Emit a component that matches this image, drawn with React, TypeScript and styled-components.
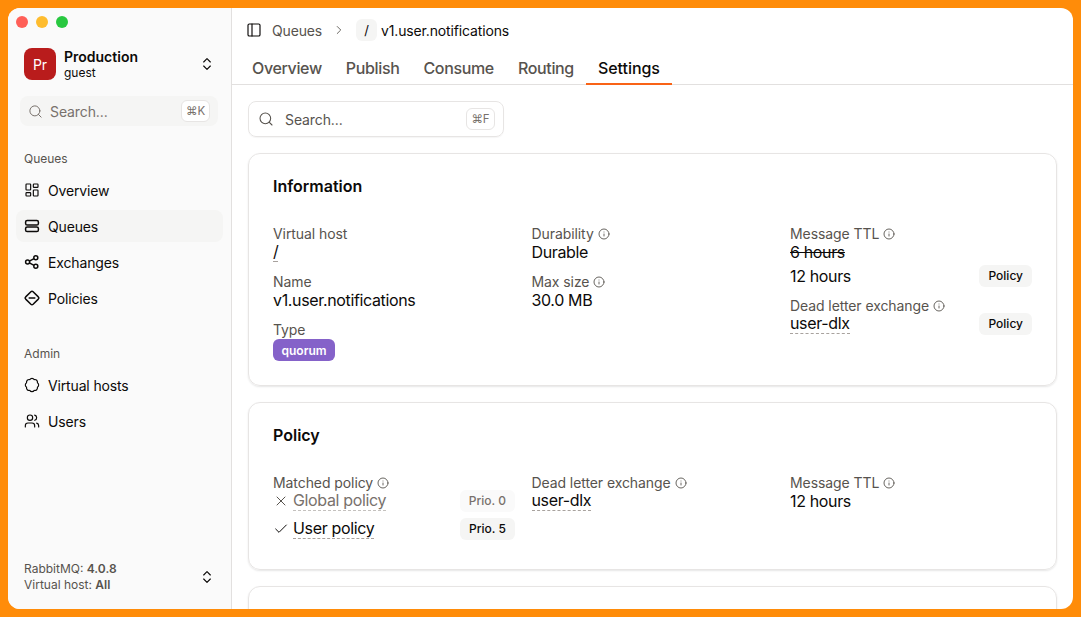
import React from 'react';
import styled, { createGlobalStyle } from 'styled-components';
import {
  Badge,
  Check,
  ChevronRight,
  ChevronsUpDown,
  Info,
  LayoutDashboard,
  PanelLeft,
  Search,
  Users,
  X,
} from 'lucide-react';

const GlobalStyle = createGlobalStyle`
  html, body {
    margin: 0;
    height: 100%;
    background: #ff8c09;
    overflow: hidden;
  }
  #root {
    height: 100%;
  }
  * {
    box-sizing: border-box;
  }
`;

const Desktop = styled.div`
  height: 617px;
  padding: 8px;
  font-family: Inter, 'Noto Sans', sans-serif;
  color: #0c0a09;
`;

const Window = styled.div`
  height: 601px;
  display: flex;
  background: #fff;
  border-radius: 12px;
  overflow: hidden;
`;

const Sidebar = styled.aside`
  width: 224px;
  flex: none;
  display: flex;
  flex-direction: column;
  background: #fafafa;
  border-right: 1px solid #e2e0df;
  padding: 8px 8px 16px;
`;

const Traffic = styled.div`
  display: flex;
  gap: 8px;
`;

const Light = styled.span<{ $color: string }>`
  width: 12px;
  height: 12px;
  border-radius: 50%;
  background: ${(p) => p.$color};
`;

const Account = styled.div`
  display: flex;
  align-items: center;
  margin-top: 20px;
  padding: 0 8px;
  height: 32px;
`;

const Avatar = styled.div`
  width: 32px;
  height: 32px;
  flex: none;
  border-radius: 8px;
  background: #b91c1c;
  color: #fff;
  font-size: 14px;
  display: flex;
  align-items: center;
  justify-content: center;
`;

const AccountText = styled.div`
  flex: 1;
  margin-left: 8px;
`;

const AccountName = styled.div`
  font-size: 14px;
  line-height: 17px;
  font-weight: 600;
`;

const AccountRole = styled.div`
  font-size: 12px;
  line-height: 16px;
`;

const SideSearch = styled.div`
  display: flex;
  align-items: center;
  height: 30px;
  margin: 16px 5px 0 4px;
  padding: 0 8px 0 8px;
  border-radius: 8px;
  background: #f5f5f4;
  color: #78716c;
  font-size: 14px;
  letter-spacing: -0.1px;
  gap: 7px;
`;

const Grow = styled.span`
  flex: 1;
`;

const Kbd = styled.span`
  display: flex;
  align-items: center;
  justify-content: center;
  width: 29px;
  height: 22px;
  border-radius: 6px;
  border: 1px solid #e7e5e4;
  background: #fff;
  font-size: 11.5px;
  color: #78716c;
`;

const SectionLabel = styled.div`
  font-size: 12px;
  line-height: 16px;
  color: #57534e;
  padding: 0 8px;
  margin-bottom: 3px;
`;

const NavGroup = styled.nav<{ $top: number }>`
  margin-top: ${(p) => p.$top}px;
  display: flex;
  flex-direction: column;
  gap: 4px;
`;

const NavItem = styled.div<{ $active?: boolean }>`
  display: flex;
  align-items: center;
  gap: 8px;
  height: 32px;
  padding: 0 8px;
  border-radius: 8px;
  font-size: 14px;
  letter-spacing: -0.15px;
  background: ${(p) => (p.$active ? '#f5f5f4' : 'transparent')};
`;

const Footer = styled.div`
  margin-top: auto;
  display: flex;
  align-items: center;
  padding: 0 8px;
`;

const FooterText = styled.div`
  flex: 1;
  font-size: 12px;
  line-height: 16px;
  color: #57534e;

  b {
    font-weight: 600;
  }
`;

const Main = styled.main`
  flex: 1;
  min-width: 0;
  overflow: hidden;
`;

const Crumbs = styled.div`
  display: flex;
  align-items: center;
  height: 44px;
  padding: 0 14px;
  font-size: 14px;
  letter-spacing: -0.15px;
`;

const CrumbLink = styled.span`
  color: #57534e;
  margin: 0 10px;
`;

const VhostChip = styled.span`
  width: 21px;
  height: 22px;
  margin: 0 4px 0 10px;
  border-radius: 6px;
  background: #f5f5f4;
  display: flex;
  align-items: center;
  justify-content: center;
  font-size: 13px;
`;

const Tabs = styled.div`
  display: flex;
  height: 33px;
  padding: 0 8px;
  border-bottom: 1px solid #e2e0df;
`;

const Tab = styled.div<{ $active?: boolean }>`
  padding: 0 12px;
  height: 33px;
  line-height: 32px;
  font-size: 16px;
  font-weight: 500;
  letter-spacing: ${(p) => (p.$active ? '-0.05px' : '-0.35px')};
  color: ${(p) => (p.$active ? '#0c0a09' : '#57534e')};
  border-bottom: ${(p) => (p.$active ? '2px solid #f96316' : 'none')};
`;

const Content = styled.div`
  padding: 16px 16px 0;
  display: flex;
  flex-direction: column;
  gap: 16px;
`;

const MainSearch = styled.div`
  display: flex;
  align-items: center;
  width: 256px;
  height: 36px;
  padding: 0 8px 0 9px;
  gap: 11px;
  border: 1px solid #e7e5e4;
  border-radius: 8px;
  box-shadow: 0 1px 1px rgba(0, 0, 0, 0.04);
  color: #57534e;
  font-size: 14px;
  letter-spacing: -0.1px;
`;

const Card = styled.section<{ $height: number }>`
  height: ${(p) => p.$height}px;
  flex: none;
  padding: 23px 24px;
  border: 1px solid #e7e5e4;
  border-radius: 12px;
  box-shadow: 0 1px 2px rgba(0, 0, 0, 0.1);
`;

const CardTitle = styled.h2`
  margin: 0 0 31px;
  font-size: 16px;
  line-height: 18px;
  font-weight: 600;
`;

const Columns = styled.div`
  display: grid;
  grid-template-columns: 242px 242px 242px;
  column-gap: 16.5px;
`;

const Column = styled.div`
  display: flex;
  flex-direction: column;
  gap: 10px;
`;

const Field = styled.div`
  display: flex;
  flex-direction: column;
`;

const Label = styled.div`
  display: flex;
  align-items: center;
  gap: 4px;
  font-size: 14px;
  line-height: 16px;
  letter-spacing: -0.08px;
  color: #57534e;
`;

const ValueRow = styled.div<{ $top?: number }>`
  display: flex;
  align-items: center;
  justify-content: space-between;
  min-height: 24px;
  margin-top: ${(p) => p.$top ?? 0}px;
  font-size: 16px;
  line-height: 24px;
  letter-spacing: -0.35px;
`;

const Struck = styled.span`
  text-decoration: line-through;
`;

const Dashed = styled.span<{ $muted?: boolean }>`
  line-height: 19px;
  border-bottom: 1px dashed ${(p) => (p.$muted ? '#c4c1be' : '#a8a29e')};
  color: ${(p) => (p.$muted ? '#78716c' : 'inherit')};
`;

const Pill = styled.span<{ $muted?: boolean }>`
  display: inline-flex;
  align-items: center;
  height: 22px;
  padding: 0 9px;
  border-radius: 6px;
  background: ${(p) => (p.$muted ? '#fafafa' : '#f5f5f4')};
  color: ${(p) => (p.$muted ? '#78716c' : '#0c0a09')};
  font-size: 12px;
  font-weight: 500;
  letter-spacing: 0;
`;

const TypeBadge = styled.span`
  display: inline-flex;
  align-items: center;
  align-self: flex-start;
  height: 22px;
  margin-top: 1px;
  padding: 0 8.5px;
  border-radius: 6px;
  background: #8562c9;
  color: #fff;
  font-size: 12px;
  font-weight: 600;
`;

const PolicyName = styled.span`
  display: flex;
  align-items: center;
  gap: 4px;
`;

const CrumbChevron = styled(ChevronRight)`
  color: #57534e;
`;

const QueuesIcon = () => (
  <svg width="16" height="16" viewBox="0 0 16 16" fill="none" stroke="currentColor" strokeWidth="1.5">
    <rect x="1.6" y="2.4" width="12.8" height="4.6" rx="1.6" />
    <rect x="1.6" y="9" width="12.8" height="4.6" rx="1.6" />
  </svg>
);

const ExchangesIcon = () => (
  <svg width="16" height="16" viewBox="0 0 16 16" fill="none" stroke="currentColor" strokeWidth="1.5">
    <circle cx="3.6" cy="8" r="2" />
    <circle cx="11.8" cy="3.8" r="2" />
    <circle cx="11.8" cy="12.2" r="2" />
    <path d="M5.4 7.1 10 4.7M5.4 8.9 10 11.3" />
  </svg>
);

const PoliciesIcon = () => (
  <svg width="16" height="16" viewBox="0 0 16 16" fill="none" stroke="currentColor" strokeWidth="1.5" strokeLinejoin="round">
    <path d="M6.9 1.7a1.6 1.6 0 0 1 2.2 0l5.2 5.2a1.6 1.6 0 0 1 0 2.2l-5.2 5.2a1.6 1.6 0 0 1-2.2 0L1.7 9.1a1.6 1.6 0 0 1 0-2.2z" />
    <path d="M5.2 8h5.6" strokeLinecap="round" />
  </svg>
);

const InfoIcon = () => <Info size={12} color="#57534e" strokeWidth={1.8} />;

const App = () => (
  <Desktop>
    <GlobalStyle />
    <Window>
      <Sidebar>
        <Traffic>
          <Light $color="#ff5f57" />
          <Light $color="#febc2e" />
          <Light $color="#28c840" />
        </Traffic>
        <Account>
          <Avatar>Pr</Avatar>
          <AccountText>
            <AccountName>Production</AccountName>
            <AccountRole>guest</AccountRole>
          </AccountText>
          <ChevronsUpDown size={16} strokeWidth={1.75} />
        </Account>
        <SideSearch>
          <Search size={15} strokeWidth={1.6} />
          <Grow>Search...</Grow>
          <Kbd>⌘K</Kbd>
        </SideSearch>
        <NavGroup $top={25}>
          <SectionLabel>Queues</SectionLabel>
          <NavItem>
            <LayoutDashboard size={16} strokeWidth={1.75} />
            Overview
          </NavItem>
          <NavItem $active>
            <QueuesIcon />
            Queues
          </NavItem>
          <NavItem>
            <ExchangesIcon />
            Exchanges
          </NavItem>
          <NavItem>
            <PoliciesIcon />
            Policies
          </NavItem>
        </NavGroup>
        <NavGroup $top={32}>
          <SectionLabel>Admin</SectionLabel>
          <NavItem>
            <Badge size={16} strokeWidth={1.75} />
            Virtual hosts
          </NavItem>
          <NavItem>
            <Users size={16} strokeWidth={1.75} />
            Users
          </NavItem>
        </NavGroup>
        <Footer>
          <FooterText>
            <div>
              RabbitMQ: <b>4.0.8</b>
            </div>
            <div>
              Virtual host: <b>All</b>
            </div>
          </FooterText>
          <ChevronsUpDown size={16} strokeWidth={1.75} />
        </Footer>
      </Sidebar>
      <Main>
        <Crumbs>
          <PanelLeft size={16} strokeWidth={1.75} />
          <CrumbLink>Queues</CrumbLink>
          <CrumbChevron size={14} strokeWidth={1.5} />
          <VhostChip>/</VhostChip>
          v1.user.notifications
        </Crumbs>
        <Tabs>
          <Tab>Overview</Tab>
          <Tab>Publish</Tab>
          <Tab>Consume</Tab>
          <Tab>Routing</Tab>
          <Tab $active>Settings</Tab>
        </Tabs>
        <Content>
          <MainSearch>
            <Search size={16} strokeWidth={1.6} />
            <Grow>Search...</Grow>
            <Kbd>⌘F</Kbd>
          </MainSearch>
          <Card $height={233}>
            <CardTitle>Information</CardTitle>
            <Columns>
              <Column>
                <Field>
                  <Label>Virtual host</Label>
                  <ValueRow $top={-2}>
                    <Dashed>/</Dashed>
                  </ValueRow>
                </Field>
                <Field>
                  <Label>Name</Label>
                  <ValueRow $top={-2}>v1.user.notifications</ValueRow>
                </Field>
                <Field>
                  <Label>Type</Label>
                  <TypeBadge>quorum</TypeBadge>
                </Field>
              </Column>
              <Column>
                <Field>
                  <Label>
                    Durability <InfoIcon />
                  </Label>
                  <ValueRow $top={-2}>Durable</ValueRow>
                </Field>
                <Field>
                  <Label>
                    Max size <InfoIcon />
                  </Label>
                  <ValueRow $top={-2}>30.0 MB</ValueRow>
                </Field>
              </Column>
              <Column>
                <Field>
                  <Label>
                    Message TTL <InfoIcon />
                  </Label>
                  <ValueRow $top={-2}>
                    <Struck>6 hours</Struck>
                  </ValueRow>
                  <ValueRow>
                    12 hours
                    <Pill>Policy</Pill>
                  </ValueRow>
                </Field>
                <Field>
                  <Label>
                    Dead letter exchange <InfoIcon />
                  </Label>
                  <ValueRow $top={-2}>
                    <Dashed>user-dlx</Dashed>
                    <Pill>Policy</Pill>
                  </ValueRow>
                </Field>
              </Column>
            </Columns>
          </Card>
          <Card $height={168}>
            <CardTitle>Policy</CardTitle>
            <Columns>
              <Column>
                <Field>
                  <Label>
                    Matched policy <InfoIcon />
                  </Label>
                  <ValueRow $top={-2}>
                    <PolicyName>
                      <X size={16} color="#57534e" strokeWidth={1.5} />
                      <Dashed $muted>Global policy</Dashed>
                    </PolicyName>
                    <Pill $muted>Prio. 0</Pill>
                  </ValueRow>
                  <ValueRow $top={4}>
                    <PolicyName>
                      <Check size={16} strokeWidth={1.5} />
                      <Dashed>User policy</Dashed>
                    </PolicyName>
                    <Pill>Prio. 5</Pill>
                  </ValueRow>
                </Field>
              </Column>
              <Column>
                <Field>
                  <Label>
                    Dead letter exchange <InfoIcon />
                  </Label>
                  <ValueRow $top={-2}>
                    <Dashed>user-dlx</Dashed>
                  </ValueRow>
                </Field>
              </Column>
              <Column>
                <Field>
                  <Label>
                    Message TTL <InfoIcon />
                  </Label>
                  <ValueRow $top={-2}>12 hours</ValueRow>
                </Field>
              </Column>
            </Columns>
          </Card>
          <Card $height={100} />
        </Content>
      </Main>
    </Window>
  </Desktop>
);

export default App;
